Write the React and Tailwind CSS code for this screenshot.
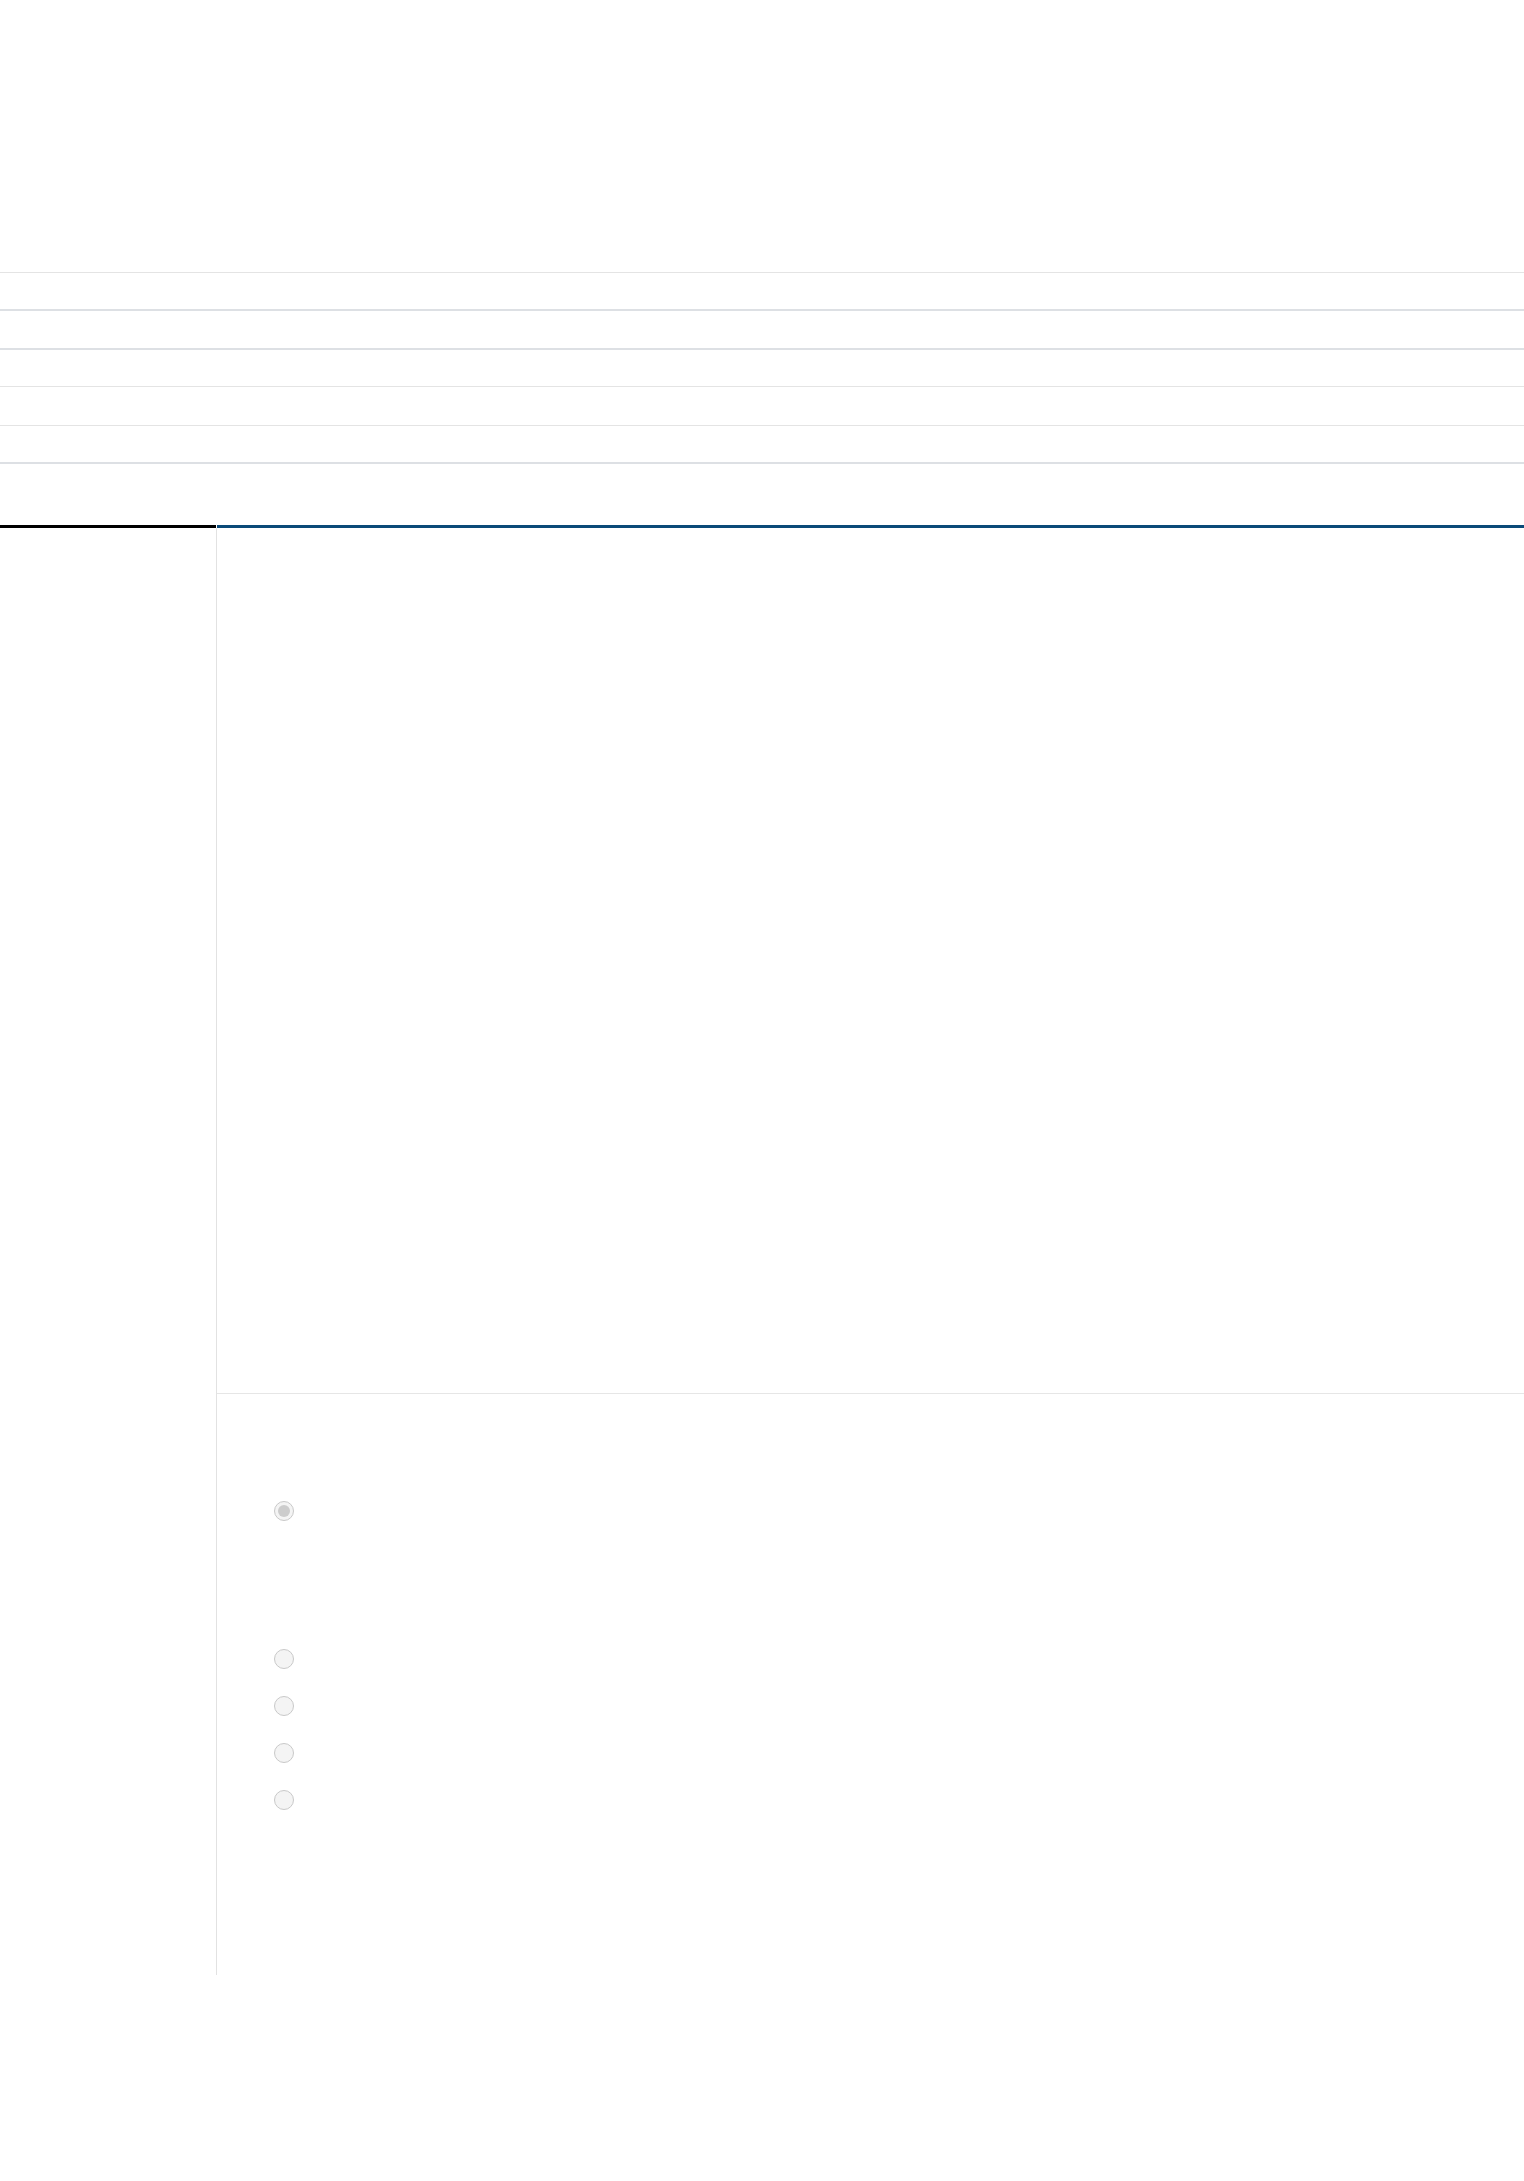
export default function App() {
  const Radio = ({ checked }) => (
    <div className="flex items-center justify-center w-5 h-5 rounded-full border-[1.5px] border-[#c9c9c9] bg-[#f4f4f4]">
      {checked && <div className="w-3 h-3 rounded-full bg-[#cccccc]" />}
    </div>
  );
  return (
    <div className="bg-white min-h-[2181px] font-['Liberation_Sans',sans-serif]">
      <div className="h-[272px]" />
      <div className="border-t border-[#e4e4e4] h-[37px]" />
      <div className="border-t-2 border-[#dde0e4] h-[39px]" />
      <div className="border-t-2 border-[#dde0e4] h-[38px]" />
      <div className="border-t border-[#e4e4e4] h-[39px]" />
      <div className="border-t border-[#e4e4e4] h-[37px]" />
      <div className="border-t-2 border-[#dde0e4] h-[63px]" />
      <div className="flex">
        <div className="w-[216px] shrink-0">
          <div className="h-[3px] bg-black" />
        </div>
        <div className="flex-1 flex flex-col">
          <div className="ml-px h-[3px] bg-[#0b4a78]" />
          <div className="border-l border-[#e2e2e2]">
            <div className="h-[866px] border-b border-[#e6e6e6]" />
            <div className="h-[581px] pl-[57px] pt-[107px] flex flex-col">
              <Radio checked />
              <div className="mt-[128px] flex flex-col gap-[27px]">
                <Radio />
                <Radio />
                <Radio />
                <Radio />
              </div>
            </div>
          </div>
        </div>
      </div>
    </div>
  );
}
